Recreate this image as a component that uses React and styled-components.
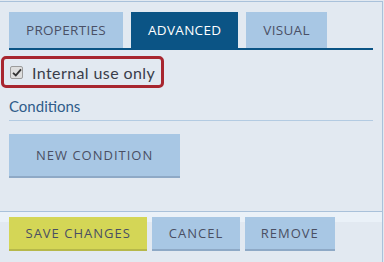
import React from "react";
import styled, { createGlobalStyle } from "styled-components";

const GlobalStyle = createGlobalStyle`
  *, *::before, *::after {
    box-sizing: border-box;
  }
  html, body {
    margin: 0;
    padding: 0;
    background: #e2e9f1;
  }
  body {
    font-family: "Open Sans", "DejaVu Sans", sans-serif;
  }
`;

const Panel = styled.div`
  width: 383px;
  height: 261px;
  margin-top: 1px;
  border-top: 1px solid #a9c1da;
  border-right: 1px solid #a9c1da;
  display: flex;
  flex-direction: column;
`;

const Body = styled.div`
  flex: 1;
  padding: 10px 9px 0 9px;
  display: flex;
  flex-direction: column;
`;

const TabBar = styled.div`
  display: flex;
  gap: 8px;
  border-bottom: 2px solid #0b5485;
`;

const Tab = styled.button`
  height: 36px;
  padding: 0 ${(p) => p.$px}px;
  border: none;
  margin: 0;
  font-family: "Open Sans", sans-serif;
  font-size: 13.5px;
  letter-spacing: 0.3px;
  background: ${(p) => (p.$active ? "#0b5485" : "#a8c7e4")};
  color: ${(p) => (p.$active ? "#ffffff" : "#4a5066")};
  cursor: pointer;
`;

const Highlight = styled.label`
  display: flex;
  align-items: center;
  gap: 9px;
  align-self: flex-start;
  margin: 6px 0 0 -8px;
  padding: 0 6px 0 6px;
  height: 32px;
  border: 3px solid #a8262f;
  border-radius: 5px;
  font-family: "Lato", sans-serif;
  font-size: 16px;
  letter-spacing: 0.4px;
  color: #3a3d4a;
`;

const CheckBox = styled.span`
  width: 13px;
  height: 13px;
  border: 1px solid #9c9c9c;
  border-radius: 2px;
  background: #dedede;
  display: flex;
  align-items: center;
  justify-content: center;
`;

const SectionTitle = styled.div`
  margin-top: 9px;
  padding-bottom: 5px;
  border-bottom: 1px solid #b3cbe2;
  font-family: "Lato", sans-serif;
  font-size: 15px;
  color: #2f5c8a;
`;

const Button = styled.button`
  height: ${(p) => p.$h}px;
  padding: 0 ${(p) => p.$px}px;
  border: none;
  border-bottom: 2px solid ${(p) => (p.$primary ? "#b6b84a" : "#8ea9c6")};
  background: ${(p) => (p.$primary ? "#d4d656" : "#a8c7e4")};
  color: #4a4f63;
  font-family: "Open Sans", sans-serif;
  font-size: 13px;
  letter-spacing: 1px;
  cursor: pointer;
`;

const NewRow = styled.div`
  margin-top: 13px;
  display: flex;
`;

const Footer = styled.div`
  height: 51px;
  border-top: 1px solid #a9c1da;
  background: linear-gradient(#eaf1f8 0, #eaf1f8 10px, #e2e9f1 10px);
  padding: 5px 9px 0 9px;
  display: flex;
  gap: 5px;
  align-items: flex-start;
`;

export default function App() {
  return (
    <>
      <GlobalStyle />
      <Panel>
        <Body>
          <TabBar>
            <Tab $px={17}>PROPERTIES</Tab>
            <Tab $px={17} $active>ADVANCED</Tab>
            <Tab $px={17}>VISUAL</Tab>
          </TabBar>
          <Highlight>
            <CheckBox>
              <svg width="10" height="9" viewBox="0 0 10 9">
                <path d="M1 4.8 L3.8 7.4 L9 1.4" fill="none" stroke="#333" strokeWidth="1.8" />
              </svg>
            </CheckBox>
            Internal use only
          </Highlight>
          <SectionTitle>Conditions</SectionTitle>
          <NewRow>
            <Button $h={44} $px={27}>NEW CONDITION</Button>
          </NewRow>
        </Body>
        <Footer>
          <Button $primary $h={34} $px={16.5}>SAVE CHANGES</Button>
          <Button $h={34} $px={16.5}>CANCEL</Button>
          <Button $h={34} $px={16}>REMOVE</Button>
        </Footer>
      </Panel>
    </>
  );
}
